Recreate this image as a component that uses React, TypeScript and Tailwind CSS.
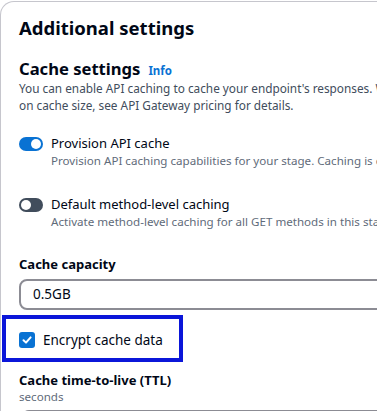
const Toggle = ({ on }: { on: boolean }) => (
  <span
    className={
      on
        ? "mt-[3px] flex h-[14px] w-[24px] shrink-0 items-center justify-end rounded-full bg-[#0972d3] px-[2px]"
        : "mt-[3px] flex h-[14px] w-[24px] shrink-0 items-center justify-start rounded-full bg-[#414d5c] px-[2px]"
    }
  >
    <span className="h-[10px] w-[10px] rounded-full bg-white" />
  </span>
);

const App = () => {
  return (
    <div
      className="h-[411px] w-[377px] overflow-hidden bg-white text-[#000716]"
      style={{ fontFamily: '"Noto Sans", "Open Sans", sans-serif' }}
    >
      <div className="mt-px w-[430px] rounded-tl-[14px] border-l border-t border-[#c6c6cd] pl-[18px] pt-[14px]">
        {/* Header */}
        <h2 className="text-[18.5px] font-bold leading-[24px]">Additional settings</h2>

        <div className="mt-[18px] flex items-baseline gap-[8px]">
          <h3 className="text-[16.6px] font-bold leading-[22px]">Cache settings</h3>
          <a className="text-[11.5px] font-bold text-[#0972d3]">Info</a>
        </div>
        <p className="whitespace-nowrap text-[11.8px] leading-[17px] text-[#414d5c]">
          You can enable API caching to cache your endpoint's responses. With caching, you can reduce the number of calls made to your endpoint. For details
          <br />
          on cache size, see API Gateway pricing for details.
        </p>

        {/* Toggles */}
        <div className="mt-[20px] flex gap-[8px]">
          <Toggle on />
          <div className="flex flex-col">
            <span className="text-[13px] leading-[18px]">Provision API cache</span>
            <span className="mt-[1px] whitespace-nowrap text-[11.6px] leading-[16px] text-[#5f6b7a]">
              Provision API caching capabilities for your stage. Caching is charged by the hour.
            </span>
          </div>
        </div>

        <div className="mt-[26px] flex gap-[8px]">
          <Toggle on={false} />
          <div className="flex flex-col">
            <span className="text-[13px] leading-[18px]">Default method-level caching</span>
            <span className="mt-[1px] whitespace-nowrap text-[11.6px] leading-[16px] text-[#5f6b7a]">
              Activate method-level caching for all GET methods in this stage.
            </span>
          </div>
        </div>

        {/* Cache capacity */}
        <div className="mt-[25px] text-[13px] font-bold leading-[18px]">Cache capacity</div>
        <div className="mt-[6px] flex h-[31px] w-[420px] items-center rounded-[8px] border-2 border-[#8c8c94] pl-[12px] text-[13.5px]">
          0.5GB
        </div>

        {/* Encrypt */}
        <div className="ml-[-17px] mt-[5px] flex h-[47px] w-[181px] items-center border-4 border-[#0b16d9] pl-[13px] pt-[2px]">
          <span className="flex h-[16px] w-[16px] items-center justify-center rounded-[3px] bg-[#0972d3]">
            <svg width="12" height="12" viewBox="0 0 12 12" fill="none">
              <path d="M2.5 6.2 L5 8.6 L9.6 3.4" stroke="white" strokeWidth="2" strokeLinecap="round" strokeLinejoin="round" />
            </svg>
          </span>
          <span className="ml-[8px] text-[13.5px] leading-[18px]">Encrypt cache data</span>
        </div>

        {/* TTL */}
        <div className="mt-[9px] text-[13px] font-bold leading-[18px]">Cache time-to-live (TTL)</div>
        <div className="text-[11.6px] leading-[16px] text-[#5f6b7a]">seconds</div>
        <div className="ml-[2px] mt-[5px] h-[31px] w-[420px] rounded-[8px] border-2 border-[#8c8c94]" />
      </div>
    </div>
  );
};

export default App;
